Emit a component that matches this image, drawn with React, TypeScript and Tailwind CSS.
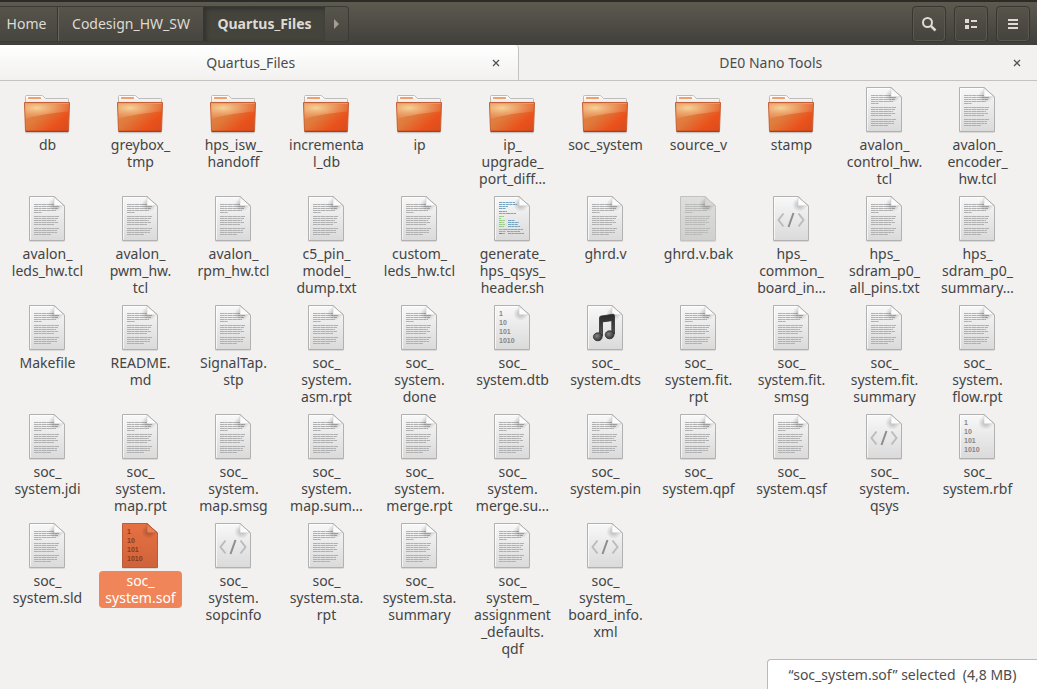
import { useState } from "react";

type Kind = "folder" | "text" | "script" | "backup" | "code" | "binary" | "audio";
type Entry = { kind: Kind; label: string };

const e = (label: string, kind: Kind = "text"): Entry => ({ kind, label });

// A newline in a label marks where the name wraps.
const entries: Entry[] = [
  e("db", "folder"),
  e("greybox_\ntmp", "folder"),
  e("hps_isw_\nhandoff", "folder"),
  e("incrementa\nl_db", "folder"),
  e("ip", "folder"),
  e("ip_\nupgrade_\nport_diff…", "folder"),
  e("soc_system", "folder"),
  e("source_v", "folder"),
  e("stamp", "folder"),
  e("avalon_\ncontrol_hw.\ntcl"),
  e("avalon_\nencoder_\nhw.tcl"),
  e("avalon_\nleds_hw.tcl"),
  e("avalon_\npwm_hw.\ntcl"),
  e("avalon_\nrpm_hw.tcl"),
  e("c5_pin_\nmodel_\ndump.txt"),
  e("custom_\nleds_hw.tcl"),
  e("generate_\nhps_qsys_\nheader.sh", "script"),
  e("ghrd.v"),
  e("ghrd.v.bak", "backup"),
  e("hps_\ncommon_\nboard_in…", "code"),
  e("hps_\nsdram_p0_\nall_pins.txt"),
  e("hps_\nsdram_p0_\nsummary…"),
  e("Makefile"),
  e("README.\nmd"),
  e("SignalTap.\nstp"),
  e("soc_\nsystem.\nasm.rpt"),
  e("soc_\nsystem.\ndone"),
  e("soc_\nsystem.dtb", "binary"),
  e("soc_\nsystem.dts", "audio"),
  e("soc_\nsystem.fit.\nrpt"),
  e("soc_\nsystem.fit.\nsmsg"),
  e("soc_\nsystem.fit.\nsummary"),
  e("soc_\nsystem.\nflow.rpt"),
  e("soc_\nsystem.jdi"),
  e("soc_\nsystem.\nmap.rpt"),
  e("soc_\nsystem.\nmap.smsg"),
  e("soc_\nsystem.\nmap.sum…"),
  e("soc_\nsystem.\nmerge.rpt"),
  e("soc_\nsystem.\nmerge.su…"),
  e("soc_\nsystem.pin"),
  e("soc_\nsystem.qpf"),
  e("soc_\nsystem.qsf"),
  e("soc_\nsystem.\nqsys", "code"),
  e("soc_\nsystem.rbf", "binary"),
  e("soc_\nsystem.sld"),
  e("soc_\nsystem.sof", "binary"),
  e("soc_\nsystem.\nsopcinfo", "code"),
  e("soc_\nsystem.sta.\nrpt"),
  e("soc_\nsystem.sta.\nsummary"),
  e("soc_\nsystem_\nassignment\n_defaults.\nqdf"),
  e("soc_\nsystem_\nboard_info.\nxml", "code"),
];

function Gradients() {
  return (
    <svg className="absolute size-0" aria-hidden="true">
      <defs>
        <linearGradient id="paper" x1="0" y1="0" x2="0" y2="1">
          <stop offset="0" stopColor="#f8f8f8" />
          <stop offset="1" stopColor="#dadada" />
        </linearGradient>
        <linearGradient id="paperOld" x1="0" y1="0" x2="0" y2="1">
          <stop offset="0" stopColor="#dededd" />
          <stop offset="1" stopColor="#d0d0cf" />
        </linearGradient>
        <linearGradient id="paperSelected" x1="0" y1="0" x2="0" y2="1">
          <stop offset="0" stopColor="#e67143" />
          <stop offset="1" stopColor="#d0633a" />
        </linearGradient>
        <radialGradient id="foldShadow" cx="0.45" cy="0.55" r="0.5">
          <stop offset="0.3" stopColor="#000" stopOpacity="0.18" />
          <stop offset="1" stopColor="#000" stopOpacity="0" />
        </radialGradient>
        <linearGradient id="folderFront" x1="0" y1="0" x2="1" y2="0.8">
          <stop offset="0" stopColor="#e48a4a" />
          <stop offset="0.45" stopColor="#df7a3c" />
          <stop offset="0.8" stopColor="#ea511b" />
          <stop offset="1" stopColor="#dc4e1e" />
        </linearGradient>
        <radialGradient id="folderGlow" cx="0.27" cy="0.3" r="0.75">
          <stop offset="0" stopColor="#f8d79c" stopOpacity="0.95" />
          <stop offset="1" stopColor="#f0a070" stopOpacity="0.2" />
        </radialGradient>
        <linearGradient id="folderBack" x1="0" y1="0" x2="0" y2="1">
          <stop offset="0" stopColor="#ffffff" />
          <stop offset="1" stopColor="#d8d8d8" />
        </linearGradient>
        <linearGradient id="note" x1="0" y1="0" x2="0" y2="1">
          <stop offset="0" stopColor="#292929" />
          <stop offset="1" stopColor="#555555" />
        </linearGradient>
        <radialGradient id="noteHead" cx="0.4" cy="0.4" r="0.6">
          <stop offset="0" stopColor="#828282" />
          <stop offset="1" stopColor="#353535" />
        </radialGradient>
      </defs>
    </svg>
  );
}

function Folder() {
  return (
    <>
      <path d="M2.5 45.5h43" stroke="#000" strokeOpacity=".18" strokeWidth="1.5" />
      <path d="M2.5 21V9.5q0-1 1-1h15.3q.8 0 1.4.7l2.3 2.3h22.2q.8 0 .8.8V21z" fill="url(#folderBack)" stroke="#bcbcbc" />
      <rect x="5" y="10" width="13" height="2" rx=".5" fill="#efa06f" />
      <path d="M1.5 15.5h45l-1 29H2.5z" fill="url(#folderFront)" stroke="#c55f35" strokeLinejoin="round" />
      <path d="M2.200 16.200h43.700l-.4 8.300C30 26 15 28 2.500 32z" fill="url(#folderGlow)" />
      <path d="M2.200 16.500h43.600" stroke="#ef9d70" strokeOpacity=".8" />
      <path d="M3 44.300h42" stroke="#b23a10" strokeWidth="1.200" />
    </>
  );
}

const textRows: [number, number][] = [
  [8.5, 25], [10.5, 25], [12.5, 24], [14.5, 22], [16.5, 8],
  [20.5, 25], [22.5, 24], [24.5, 22], [26.5, 24], [28.5, 20],
  [32.5, 25], [34.5, 23], [36.5, 23], [38.5, 17],
];

const scriptRows: [number, number, number, string][] = [
  [6.5, 11, 16, "#78a5c2"], [8.5, 11, 18, "#78a5c2"], [10.5, 11, 9, "#78a5c2"], [12.5, 11, 7, "#78a5c2"],
  [15.5, 11, 8, "#ad86be"], [17.5, 11, 8, "#ca89a9"], [17.5, 19, 9, "#78a5c2"],
  [20.5, 11, 5, "#91d07e"], [22.5, 11, 2, "#91d07e"], [24.5, 11, 6, "#91d07e"], [24.5, 20, 7, "#78a5c2"],
  [26.5, 11, 5, "#91d07e"], [26.5, 20, 11, "#78a5c2"], [28.5, 11, 6, "#91d07e"], [28.5, 20, 10, "#78a5c2"],
  [30.5, 11, 5, "#91d07e"], [30.5, 20, 12, "#78a5c2"], [33.5, 11, 5, "#a8a8a8"], [33.5, 16, 19, "#ca89a9"],
  [35.5, 11, 7, "#a8a8a8"], [35.5, 19, 13, "#ca89a9"], [37.5, 11, 3, "#e45b5b"], [37.5, 14, 3, "#a8a8a8"],
  [37.5, 20, 16, "#78a5c2"],
];

function Page({ kind, selected }: { kind: Kind; selected: boolean }) {
  const old = kind === "backup";
  const fill = selected ? "url(#paperSelected)" : old ? "url(#paperOld)" : "url(#paper)";
  const edge = selected ? "#b95c38" : old ? "#c2c2c1" : "#b1b1b1";
  return (
    <>
      <path d="M6.5 45.5h35" stroke="#000" strokeOpacity=".1" />
      <path d="M6.5.5h24.500L41.500 10v34.500h-35z" fill={fill} stroke={edge} />
      {!selected && !old && <path d="M7.5 43.5v-42h23" fill="none" stroke="#fff" strokeOpacity=".7" />}
      {(kind === "text" || old) &&
        textRows.map(([y, w]) => (
          <path key={y} d={`M11 ${y}h${w}`} stroke={old ? "#b9b9b8" : "#b0b0b0"} strokeDasharray="4 .3 3 .3 5 .3" />
        ))}
      {kind === "script" &&
        scriptRows.map(([y, x, w, c], i) => <path key={i} d={`M${x} ${y}h${w}`} stroke={c} strokeDasharray="3 .4" />)}
      <path d="M26 1h5l10 9v5H26z" fill="url(#foldShadow)" />
      <path
        d="M31 .8V8.500q0 1.300 1.300 1.300H41.300z"
        fill={selected ? "#e98356" : old ? "#d8d8d7" : "#fcfcfc"}
        stroke={selected ? "#b95c38" : old ? "#c2c2c1" : "#cccccc"}
        strokeWidth=".6"
      />
      <path d="M31 .5 41.500 10" stroke={edge} />
      {kind === "code" && (
        <g fill="none" strokeWidth="2">
          <path d="m16.5 17.5-5 6.500 5 6.500M31.500 17.500l5 6.500-5 6.500" stroke="#bcbcbc" />
          <path d="M26.500 17 21.500 31" stroke="#8d8d8d" />
        </g>
      )}
      {kind === "binary" && (
        <g
          fill={selected ? "#843b20" : "#868686"}
          fontFamily="'Liberation Sans', sans-serif"
          fontWeight="700"
          fontSize="7"
        >
          <text x="11" y="11">1</text>
          <text x="11" y="20">10</text>
          <text x="11" y="29">101</text>
          <text x="11" y="38">1010</text>
        </g>
      )}
      {kind === "audio" && (
        <g stroke="#303030" strokeWidth=".8">
          <path d="M18.500 12.800q0-1.500 1.500-1.700L32 9.200q1.500-.1 1.500 1.500V29h-2.700V15.700l-9.300 1.200V31h-3z" fill="url(#note)" />
          <ellipse cx="16.800" cy="31.800" rx="4.400" ry="4" fill="url(#noteHead)" />
          <ellipse cx="28.600" cy="29.800" rx="4.400" ry="4" fill="url(#noteHead)" />
        </g>
      )}
    </>
  );
}

function FileItem({ entry, selected, onSelect }: { entry: Entry; selected: boolean; onSelect: () => void }) {
  return (
    <li>
      <button type="button" aria-pressed={selected} onClick={onSelect} className="flex w-full flex-col items-center">
        <svg viewBox="0 0 49 48" className="h-12 w-[49px]" aria-hidden="true">
          {entry.kind === "folder" ? <Folder /> : <Page kind={entry.kind} selected={selected} />}
        </svg>
        <span
          className={`rounded px-1.5 pt-px pb-0.5 text-center whitespace-pre ${
            selected ? "bg-[#f08559] text-white" : "text-[#444444]"
          }`}
        >
          {entry.label}
        </span>
      </button>
    </li>
  );
}

const toolButton =
  "flex h-9 w-[34px] items-center justify-center rounded border border-[#37362f] bg-linear-to-b from-[#57544b] to-[#43423c] text-[#dfdbd2] shadow-[inset_0_0_0_1px_#5b584f]";

function Tab({ title, active }: { title: string; active: boolean }) {
  return (
    <div
      className={`flex items-center border-b border-[#c5c3c0] pl-3.5 ${
        active ? "rounded-tr border-r bg-linear-to-b from-white to-[#f2f1f0] pr-3.5" : "bg-[#f2f1f0] pr-3"
      }`}
    >
      <button type="button" role="tab" aria-selected={active} className="flex-1 text-center text-[#4c4c4c]">
        {title}
      </button>
      <button type="button" aria-label={`Close ${title}`} className="flex size-4 items-center justify-center">
        <svg viewBox="0 0 8 8" className="size-2" aria-hidden="true">
          <path d="m1 1 6 6M7 1 1 7" stroke="#555" strokeWidth="1.300" />
        </svg>
      </button>
    </div>
  );
}

export default function App() {
  const [selected, setSelected] = useState(45);
  return (
    <div className="flex min-h-screen flex-col bg-[#f2f1f0] font-['Noto_Sans',sans-serif] text-[14px] leading-[17px]">
      <Gradients />
      <header className="flex h-[45px] items-center justify-between border-t-2 border-[#2c2b27] bg-linear-to-b from-[#5d5a50] to-[#403f3a] pr-[7px] text-[#dfdbd2]">
        <nav
          aria-label="Path"
          className="flex h-9 overflow-hidden rounded-r border-y border-r border-[#3b3a34] bg-linear-to-b from-[#57544b] to-[#46453f] [text-shadow:0_-1px_#33322d]"
        >
          <button type="button" className="w-[58px] border-r border-[#37362f] pr-1 text-center">Home</button>
          <button type="button" className="w-[146px] border-r border-l border-r-[#37362f] border-l-[#68655c] text-center">
            Codesign_HW_SW
          </button>
          <button
            type="button"
            aria-current="page"
            className="w-[121px] bg-[#44433c] text-center font-bold shadow-[inset_2px_2px_4px_#32312c]"
          >
            Quartus_Files
          </button>
          <button type="button" aria-label="Next folder" className="flex w-[23px] items-center justify-center">
            <svg viewBox="0 0 5 10" className="h-2.5 w-[5px]" aria-hidden="true">
              <path d="M0 0l5 5-5 5z" fill="#a19e94" />
            </svg>
          </button>
        </nav>
        <div className="flex gap-2">
          <button type="button" aria-label="Search" className={toolButton}>
            <svg viewBox="0 0 16 16" className="size-4" fill="none" stroke="currentColor" aria-hidden="true">
              <circle cx="6.500" cy="6.500" r="4.500" strokeWidth="2" />
              <path d="m9.800 9.800 4.700 4.700" strokeWidth="2.500" />
            </svg>
          </button>
          <button type="button" aria-label="View options" className={toolButton}>
            <svg viewBox="0 0 12 10" className="h-2.5 w-3" fill="currentColor" aria-hidden="true">
              <path d="M0 0h4v4H0zM6 1h6v2H6zM0 6h4v4H0zM6 7h6v2H6z" />
            </svg>
          </button>
          <button type="button" aria-label="Menu" className={toolButton}>
            <svg viewBox="0 0 10 10" className="size-2.5" fill="currentColor" aria-hidden="true">
              <path d="M0 0h10v2H0zM0 4h10v2H0zM0 8h10v2H0z" />
            </svg>
          </button>
        </div>
      </header>
      <div role="tablist" className="grid h-9 grid-cols-2">
        <Tab title="Quartus_Files" active />
        <Tab title="DE0 Nano Tools" active={false} />
      </div>
      <main className="flex-1 pt-1.5">
        <ul className="grid auto-rows-[minmax(109px,auto)] grid-cols-[repeat(auto-fill,93px)] pl-px">
          {entries.map((entry, i) => (
            <FileItem key={entry.label} entry={entry} selected={i === selected} onSelect={() => setSelected(i)} />
          ))}
        </ul>
      </main>
      <output className="fixed right-0 bottom-0 min-w-[270px] rounded-tl border-t border-l border-[#bbb9b6] bg-white px-3.5 py-1.5 text-center whitespace-pre text-[#4c4c4c]">
        “soc_system.sof” selected  (4,8 MB)
      </output>
    </div>
  );
}
